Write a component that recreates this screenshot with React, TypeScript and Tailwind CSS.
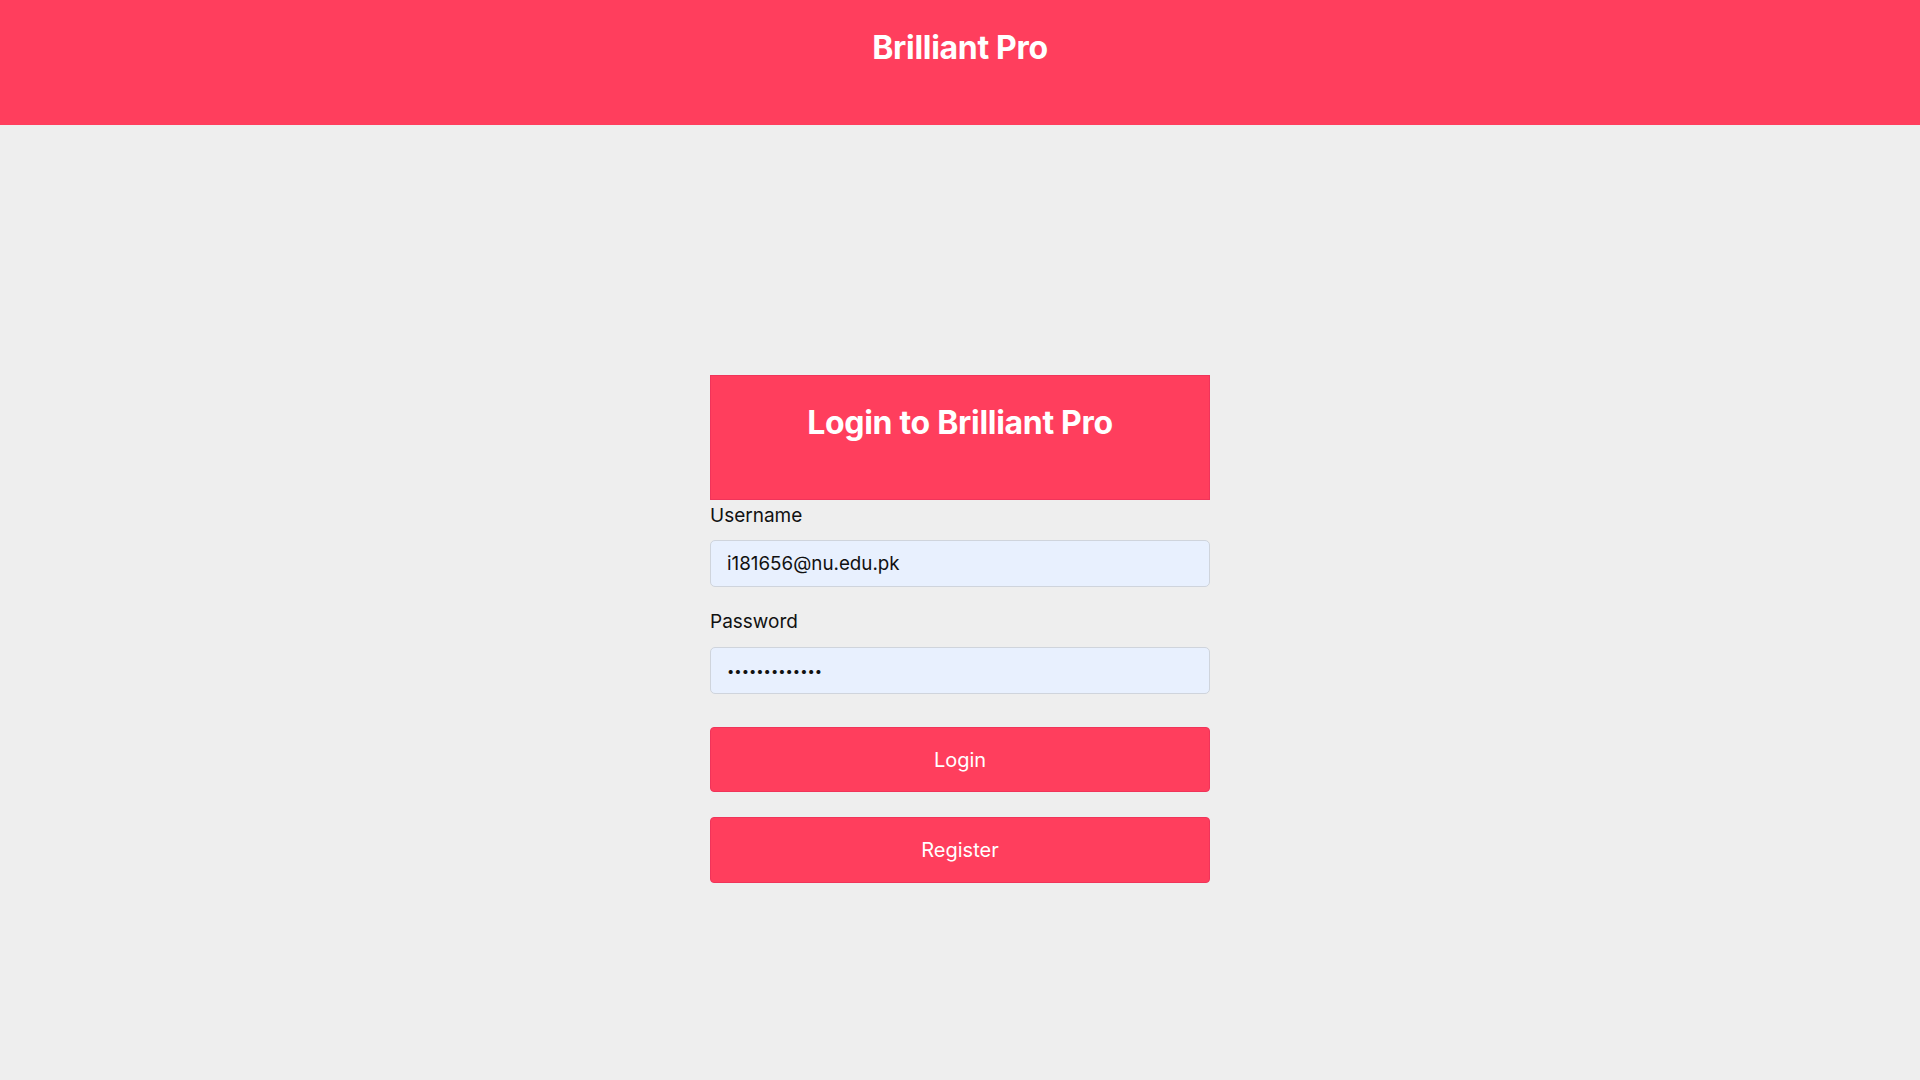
import React from "react";

export default function App() {
  return (
    <div className="min-h-screen w-full bg-[#eeeeee] font-['Inter',sans-serif] text-[#111827]">
      <header className="h-[125px] bg-[#ff3e5d] flex justify-center pt-[28px]">
        <h1 className="text-[32px] leading-[40px] font-bold text-white tracking-[-0.3px]">Brilliant Pro</h1>
      </header>
      <main className="flex justify-center pt-[250px]">
        <div className="w-[500px] flex flex-col">
          <div className="h-[125px] bg-[#ff3e5d] border border-[#f0345a] flex justify-center pt-[25px]">
            <h2 className="text-[32px] leading-[44px] font-bold text-white tracking-[-0.3px]">Login to Brilliant Pro</h2>
          </div>
          <label className="mt-[4px] text-[19px] leading-[24px] text-[#111]">Username</label>
          <input
            readOnly
            value="i181656@nu.edu.pk"
            className="mt-[12px] h-[47px] w-full rounded-[5px] border border-[#cfd4dc] bg-[#e8f0fe] px-[16px] text-[18.8px] text-[#111] outline-none"
          />
          <label className="mt-[23px] text-[19px] leading-[24px] text-[#111]">Password</label>
          <input
            readOnly
            type="password"
            value="abcdefghijklm"
            className="mt-[13px] h-[47px] w-full rounded-[5px] border border-[#cfd4dc] bg-[#e8f0fe] px-[16px] text-[13px] text-[#111] outline-none"
          />
          <button className="mt-[33px] h-[65px] w-full rounded-[4px] border border-[#f0345a] bg-[#ff3e5d] text-[20px] text-white">
            Login
          </button>
          <button className="mt-[25px] h-[66px] w-full rounded-[4px] border border-[#f0345a] bg-[#ff3e5d] text-[20px] text-white">
            Register
          </button>
        </div>
      </main>
    </div>
  );
}
